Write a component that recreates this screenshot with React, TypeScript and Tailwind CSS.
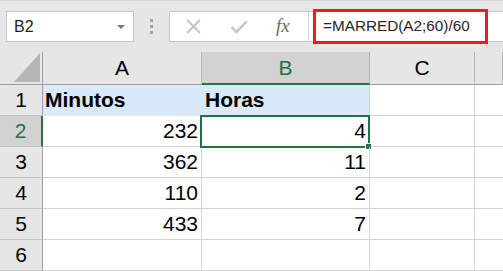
import type { ReactNode } from "react";

const rows: { n: number; a: string; b: string }[] = [
  { n: 1, a: "Minutos", b: "Horas" },
  { n: 2, a: "232", b: "4" },
  { n: 3, a: "362", b: "11" },
  { n: 4, a: "110", b: "2" },
  { n: 5, a: "433", b: "7" },
  { n: 6, a: "", b: "" },
];

function Toolbar() {
  return (
    <div className="flex h-[52px] items-center border-t border-[#d6d6d6] bg-[#e6e6e6] pl-[6px]">
      {/* name box */}
      <div className="flex h-[31px] w-[128px] items-center justify-between border border-[#c6c6c6] bg-white pl-[7px] pr-[8px]">
        <span className="text-[16px] text-[#222]">B2</span>
        <span className="h-0 w-0 border-x-[4px] border-t-[4px] border-x-transparent border-t-[#777]" />
      </div>

      {/* grip */}
      <div className="mx-[16px] flex flex-col gap-[3px]">
        <span className="h-[3px] w-[3px] bg-[#a3a3a3]" />
        <span className="h-[3px] w-[3px] bg-[#a3a3a3]" />
        <span className="h-[3px] w-[3px] bg-[#a3a3a3]" />
      </div>

      {/* formula bar */}
      <div className="flex h-[31px] flex-1 items-center border-y border-l border-[#c6c6c6] bg-white">
        <div className="flex h-full w-[139px] items-center border-r border-[#d6d6d6] pl-[15px]">
          <svg width="15" height="15" viewBox="0 0 15 15" className="ml-[1px]">
            <path d="M1 1 L14 14 M14 1 L1 14" stroke="#c2c2c2" strokeWidth="1.8" />
          </svg>
          <svg width="18" height="14" viewBox="0 0 18 14" className="ml-[29px]">
            <path d="M1.5 7 L6.5 12 L16.5 1.5" stroke="#c2c2c2" strokeWidth="2.4" fill="none" />
          </svg>
          <span className="ml-[28px] text-[19px] italic text-[#6b6b6b] [font-family:'Liberation_Serif',serif]">
            fx
          </span>
        </div>
        <div className="flex h-full flex-1 items-center pl-[4px]">
          <div className="flex h-[35px] w-[175px] items-center border-[3px] border-[#ec1c24] pl-[7px]">
            <span className="whitespace-nowrap text-[15.3px] text-[#262626]">=MARRED(A2;60)/60</span>
          </div>
        </div>
      </div>
    </div>
  );
}

function HeadCell({ children, active = false }: { children?: ReactNode; active?: boolean }) {
  return (
    <div
      className={
        active
          ? "flex items-center justify-center border-r border-b-2 border-r-[#b0b0b0] border-b-[#217346] bg-[#d2d2d2] text-[#217346]"
          : "flex items-center justify-center border-r border-b border-r-[#b8b8b8] border-b-[#9e9e9e] bg-[#e6e6e6] text-black"
      }
    >
      {children}
    </div>
  );
}

function RowHead({ n }: { n: number }) {
  return (
    <div
      className={
        n === 2
          ? "flex items-center justify-center border-r-2 border-b border-r-[#217346] border-b-[#c6c6c6] bg-[#d2d2d2] text-[#217346]"
          : "flex items-center justify-center border-r border-b border-r-[#9e9e9e] border-b-[#c6c6c6] bg-[#e6e6e6] text-black"
      }
    >
      {n}
    </div>
  );
}

export default function App() {
  return (
    <div className="h-[271px] w-[503px] overflow-hidden bg-white [font-family:'Liberation_Sans',Arial,sans-serif]">
      <Toolbar />

      <div className="grid grid-cols-[43px_159px_168px_105px_1fr] grid-rows-[33px_repeat(6,31px)] text-[21px]">
        {/* corner */}
        <div className="flex items-end justify-end border-r border-b border-r-[#9e9e9e] border-b-[#9e9e9e] bg-[#e6e6e6] pb-[2px] pr-[2px]">
          <svg width="26" height="29" viewBox="0 0 26 29">
            <path d="M26 0 L26 29 L0 29 Z" fill="#b5b5b5" />
          </svg>
        </div>
        <HeadCell>A</HeadCell>
        <HeadCell active>B</HeadCell>
        <HeadCell>C</HeadCell>
        <HeadCell />

        {rows.map((r) => (
          <Row key={r.n} {...r} />
        ))}
      </div>
    </div>
  );
}

function Row({ n, a, b }: { n: number; a: string; b: string }) {
  if (n === 1) {
    return (
      <>
        <RowHead n={n} />
        <div className="flex items-center border-b border-[#dae9f8] bg-[#dae9f8] pl-[2px] font-bold">{a}</div>
        <div className="flex items-center border-b border-l border-r border-[#dae9f8] border-r-[#d4d4d4] bg-[#dae9f8] pl-[2px] font-bold">
          {b}
        </div>
        <div className="border-r border-b border-[#d4d4d4]" />
        <div className="border-b border-[#d4d4d4]" />
      </>
    );
  }
  return (
    <>
      <RowHead n={n} />
      <div className="flex items-center justify-end border-r border-b border-[#d4d4d4] pr-[3px]">{a}</div>
      <div className="relative flex items-center justify-end border-r border-b border-[#d4d4d4] pr-[3px]">
        {b}
        {n === 2 && (
          <>
            <div className="pointer-events-none absolute -left-[2px] -top-[1px] h-[33px] w-[170px] border-2 border-[#217346]" />
            <div className="absolute -bottom-[4px] -right-[3px] h-[7px] w-[7px] border border-white bg-[#217346]" />
          </>
        )}
      </div>
      <div className="border-r border-b border-[#d4d4d4]" />
      <div className="border-b border-[#d4d4d4]" />
    </>
  );
}
